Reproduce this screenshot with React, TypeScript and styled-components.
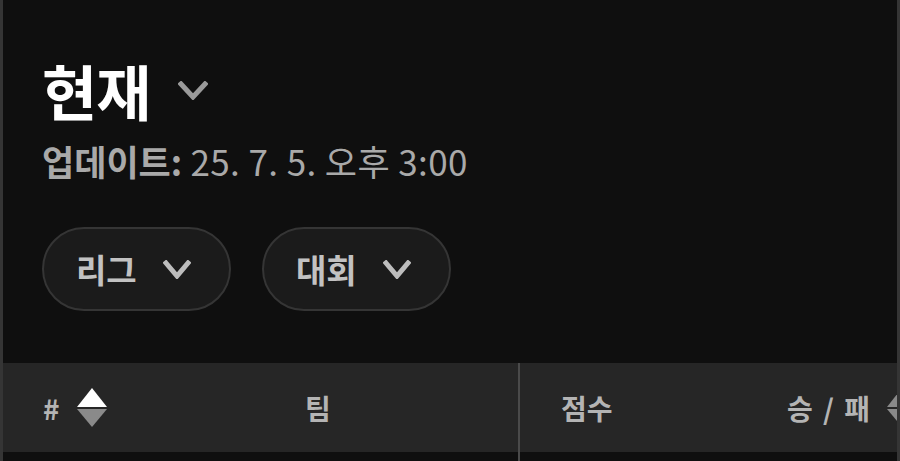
import React from "react";
import styled, { createGlobalStyle } from "styled-components";

const Global = createGlobalStyle`
  html, body { margin: 0; padding: 0; background: #0f0f0f; }
  body { font-family: "Noto Sans CJK KR", "Noto Sans", sans-serif; overflow: hidden; }
  * { box-sizing: border-box; }
`;

const Page = styled.div`
  width: 900px;
  height: 461px;
  background: #0f0f0f;
  border-left: 3px solid #353535;
  border-right: 3px solid #353535;
  overflow: hidden;
  display: flex;
  flex-direction: column;
`;

const Intro = styled.div`
  padding: 50px 0 0 39px;
  display: flex;
  flex-direction: column;
`;

const TitleRow = styled.div`
  display: flex;
  align-items: center;
  gap: 28px;
`;

const Title = styled.h1`
  margin: 0;
  font-size: 60px;
  font-weight: 700;
  line-height: 80px;
  color: #ffffff;
  letter-spacing: -1px;
`;

const Updated = styled.p`
  margin: 8px 0 0;
  font-size: 35px;
  line-height: 46px;
  color: #a9a9a9;
  font-weight: 400;
  letter-spacing: 0.4px;
`;

const UpdatedLabel = styled.span`
  font-weight: 700;
  letter-spacing: 0;
`;

const Filters = styled.div`
  display: flex;
  gap: 31px;
  margin-top: 43px;
`;

const Pill = styled.button`
  height: 84px;
  width: 189px;
  border-radius: 42px;
  border: 2px solid #353535;
  background: #1b1b1b;
  display: flex;
  align-items: center;
  justify-content: space-between;
  padding: 0 38px 0 32px;
  font-family: inherit;
  font-size: 33px;
  font-weight: 700;
  color: #c2c2c2;
  cursor: pointer;
`;

const Table = styled.div`
  margin-top: 52px;
  width: 1000px;
  display: flex;
  flex-direction: column;
`;

const Row = styled.div<{ $head?: boolean }>`
  display: grid;
  grid-template-columns: 515px 2px 1fr;
  height: ${(p) => (p.$head ? "89px" : "60px")};
  background: ${(p) => (p.$head ? "#262626" : "#0f0f0f")};
`;

const Divider = styled.div`
  background: #4a4a4a;
`;

const Group = styled.div`
  display: flex;
  align-items: center;
`;

const Cell = styled.div<{ $w?: number; $pad?: number }>`
  display: flex;
  align-items: center;
  gap: 17px;
  width: ${(p) => (p.$w ? `${p.$w}px` : "auto")};
  padding-left: ${(p) => p.$pad ?? 0}px;
  font-size: 28px;
  font-weight: 700;
  color: #b4b4b4;
  white-space: nowrap;
  word-spacing: 4px;
`;

const Chevron = ({ w, h, color }: { w: number; h: number; color: string }) => (
  <svg width={w} height={h} viewBox={`0 0 ${w} ${h}`} fill="none">
    <polyline
      points={`3,3 ${w / 2},${h - 3} ${w - 3},3`}
      stroke={color}
      strokeWidth={5}
      strokeLinecap="square"
      strokeLinejoin="miter"
    />
  </svg>
);

const SortIcon = ({ active }: { active?: boolean }) => (
  <svg width="30" height="39" viewBox="0 0 30 39">
    <polygon points="15,0 30,19 0,19" fill={active ? "#ffffff" : "#8a8a8a"} />
    <polygon points="0,21 30,21 15,39" fill="#8a8a8a" />
  </svg>
);

export default function App() {
  return (
    <>
      <Global />
      <Page>
        <Intro>
          <TitleRow>
            <Title>현재</Title>
            <Chevron w={30} h={19} color="#9a9a9a" />
          </TitleRow>
          <Updated>
            <UpdatedLabel>업데이트:</UpdatedLabel> 25. 7. 5. 오후 3:00
          </Updated>
          <Filters>
            <Pill>
              리그
              <Chevron w={28} h={19} color="#bdbdbd" />
            </Pill>
            <Pill>
              대회
              <Chevron w={28} h={19} color="#bdbdbd" />
            </Pill>
          </Filters>
        </Intro>
        <Table>
          <Row $head>
            <Group>
              <Cell $w={262} $pad={40}>
                #
                <SortIcon active />
              </Cell>
              <Cell $pad={40}>팀</Cell>
            </Group>
            <Divider />
            <Group>
              <Cell $w={267} $pad={41}>점수</Cell>
              <Cell>
                승 / 패
                <SortIcon />
              </Cell>
            </Group>
          </Row>
          <Row>
            <Group />
            <Divider />
            <Group />
          </Row>
        </Table>
      </Page>
    </>
  );
}
